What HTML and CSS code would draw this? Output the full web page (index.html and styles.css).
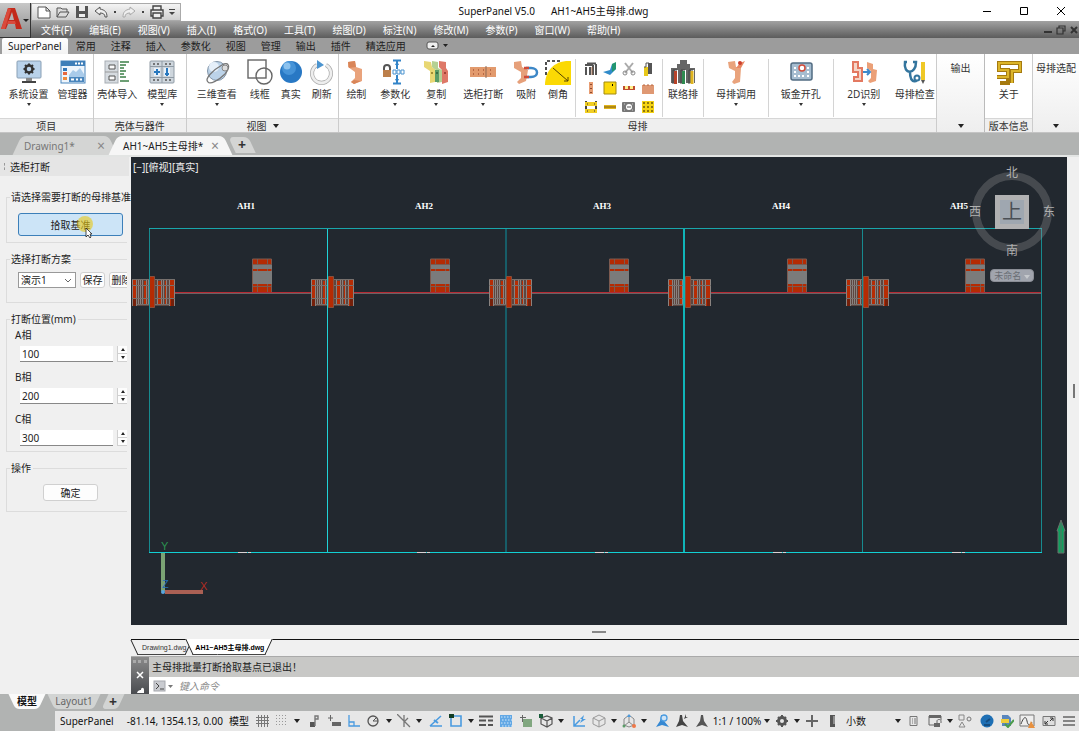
FILE: index.html
```html
<!DOCTYPE html>
<html lang="zh-CN">
<head>
    <meta charset="UTF-8">
    <meta name="viewport" content="width=device-width, initial-scale=1.0">
    <title>SuperPanel V5.0</title>
    <link rel="stylesheet" href="styles.css">
</head>
<body>
    <header class="top">
        <button class="app-button" aria-label="应用程序菜单">
            <svg width="31" height="31" viewBox="0 0 31 31">
                <path d="M1 24 8 3h7l7 21h-6l-1-5H8l-2 5z" fill="#c32a1b"/>
                <path d="M9 15h5l-2-8z" fill="#b4b4b4"/>
                <path d="M8 3l3 1-6 20H1zM8 16h7l1 3H7z" fill="#d94a3c"/>
                <path d="M23 14h6l-3 3z" fill="#222"/>
            </svg>
        </button>
        <div class="titlebar">
            <div class="quick">
                <button aria-label="新建"><svg width="16" height="16" viewBox="0 0 16 16"><path d="M2 3h8l4 4v7H2zM10 3v4h4" fill="#fff" stroke="#555"/></svg></button>
                <button aria-label="打开"><svg width="16" height="16" viewBox="0 0 16 16"><path d="M2 13V4h4l1 1h5v3M2 13l3-5h9l-3 5z" fill="#ddd" stroke="#555"/></svg></button>
                <button aria-label="保存"><svg width="16" height="16" viewBox="0 0 16 16"><path d="M2 2h12v12H2z" fill="#555"/><path d="M5 2h6v5H5zM5 10h6v3H5z" fill="#eee"/></svg></button>
                <button aria-label="放弃"><svg width="16" height="16" viewBox="0 0 16 16"><path d="M7 3 2 7l5 4V9c3 0 5 1 5 4h2c0-5-2-7-7-8z" fill="#eee" stroke="#555"/></svg></button>
                <span class="dot"></span>
                <button aria-label="重做"><svg width="16" height="16" viewBox="0 0 16 16"><path d="M9 3l5 4-5 4V9c-3 0-5 1-5 4H2c0-5 2-7 7-8z" fill="#eee" stroke="#aaa"/></svg></button>
                <span class="dot"></span>
                <button aria-label="打印"><svg width="16" height="16" viewBox="0 0 16 16"><path d="M4 6V2h8v4M4 12H2V6h12v6h-2M4 9h8v5H4z" fill="#eee" stroke="#444" stroke-width="1.4"/></svg></button>
                <button class="quick-more" aria-label="自定义"><svg width="8" height="8" viewBox="0 0 8 8"><path d="M1 1.500h6" stroke="#444"/><path d="M1 4h6L4 7z" fill="#444"/></svg></button>
            </div>
            <h1 class="title"><span>SuperPanel V5.0</span><span>AH1~AH5主母排.dwg</span></h1>
            <div class="window-buttons">
                <button aria-label="最小化"><svg width="10" height="10" viewBox="0 0 10 10"><path d="M1 5.500h8" stroke="#000"/></svg></button>
                <button aria-label="最大化"><svg width="10" height="10" viewBox="0 0 10 10"><path d="M1.500 1.500h7v7h-7z" fill="none" stroke="#000"/></svg></button>
                <button aria-label="关闭"><svg width="10" height="10" viewBox="0 0 10 10"><path d="M1 1l8 8M9 1l-8 8" stroke="#000"/></svg></button>
            </div>
        </div>
        <nav class="menubar">
            <a href="#">文件(F)</a>
            <a href="#">编辑(E)</a>
            <a href="#">视图(V)</a>
            <a href="#">插入(I)</a>
            <a href="#">格式(O)</a>
            <a href="#">工具(T)</a>
            <a href="#">绘图(D)</a>
            <a href="#">标注(N)</a>
            <a href="#">修改(M)</a>
            <a href="#">参数(P)</a>
            <a href="#">窗口(W)</a>
            <a href="#">帮助(H)</a>
            <div class="doc-buttons">
                <button aria-label="最小化文档"><svg width="10" height="10" viewBox="0 0 10 10"><path d="M1 7h8" stroke="#333" stroke-width="2"/></svg></button>
                <button aria-label="还原文档"><svg width="10" height="10" viewBox="0 0 10 10"><path d="M3 3V1h6v5H7M1 3h6v6H1z" fill="none" stroke="#333" stroke-width="1.200"/></svg></button>
                <button aria-label="关闭文档"><svg width="10" height="10" viewBox="0 0 10 10"><path d="M2 2l6 6M8 2L2 8" stroke="#333" stroke-width="2"/></svg></button>
            </div>
        </nav>
    </header>

    <nav class="ribbon-tabs">
        <a href="#" class="active">SuperPanel</a>
        <a href="#">常用</a>
        <a href="#">注释</a>
        <a href="#">插入</a>
        <a href="#">参数化</a>
        <a href="#">视图</a>
        <a href="#">管理</a>
        <a href="#">输出</a>
        <a href="#">插件</a>
        <a href="#">精选应用</a>
        <button class="ribbon-toggle" aria-label="最小化功能区">
            <svg width="24" height="10" viewBox="0 0 24 10"><rect x="1" y="1" width="11" height="7" rx="2" fill="#eee" stroke="#555"/><path d="M5 6l2-2 2 2zM17 3h5l-2.500 3z" fill="#222"/></svg>
        </button>
    </nav>

    <section class="ribbon">
        <div class="panel panel-project">
            <div class="tools">
                <button class="tool w48 more">
                    <svg width="26" height="26" viewBox="0 0 26 26"><rect x="1" y="2" width="24" height="17" rx="1" fill="#b9d2ea" stroke="#8aa0b5"/><path d="M10 19h6v3h-6z" fill="#888"/><path d="M6 22h14v2H6z" fill="#444"/><circle cx="13" cy="10" r="3.500" fill="none" stroke="#333" stroke-width="2.500"/><path d="M13 4.500v2M13 13.500v2M7.500 10h2M16.500 10h2M9 6l1.500 1.500M17 6l-1.500 1.500M9 14l1.500-1.500M17 14l-1.500-1.500" stroke="#333" stroke-width="2"/></svg>
                    <span>系统设置</span>
                </button>
                <button class="tool w40">
                    <svg width="26" height="26" viewBox="0 0 26 26"><rect x="1" y="2" width="24" height="22" fill="#eef5fc" stroke="#4a86bd"/><path d="M1 2h24v5H1z" fill="#3f7fb9"/><path d="M15 4.500h2M18 4.500h2M21 4.500h2" stroke="#fff" stroke-width="2"/><path d="M9 16l4-5 3 2 4-4 4 6v3H9z" fill="#a9cbea"/><path d="M3 9h4v3H3z" fill="#3579b8"/><path d="M3 13h4v3H3z" fill="#e8693f"/><path d="M3 18h4v3H3z" fill="#f08b3c"/><path d="M9 18h15v5H9z" fill="#4a86bd"/><path d="M11 20.500h3M16 20.500h2M20 20.500h2" stroke="#fff" stroke-width="2"/></svg>
                    <span>管理器</span>
                </button>
            </div>
            <h2>项目</h2>
        </div>
        <div class="panel panel-shell">
            <div class="tools">
                <button class="tool w45">
                    <svg width="26" height="26" viewBox="0 0 26 26"><rect x="1" y="2" width="13" height="22" fill="#d6dbe0" stroke="#a7adb3"/><path d="M1 13h13" stroke="#999"/><path d="M5 6h6v4H5zM5 17h6v4H5z" fill="#fafafa" stroke="#555"/><path d="M16 3h9M16 6h6M16 9h4M16 12h6M16 15h4M16 18h6M16 22h9" stroke="#3c8048" stroke-width="1.500"/></svg>
                    <span>壳体导入</span>
                </button>
                <button class="tool w45 more">
                    <svg width="26" height="26" viewBox="0 0 26 26"><rect x="1" y="2" width="24" height="22" rx="1" fill="#ced6dd" stroke="#909ba5"/><path d="M13 2v22M1 7.500h24M1 18.500h24" stroke="#909ba5"/><path d="M5 9h6v8H5zM15 9h6v8h-6z" fill="#e8f1fa"/><path d="M8 10v6M5 13h6M18 9v8M16 15h4" stroke="#2878be" stroke-width="2"/><path d="M4 5h2M8 5h2M16 5h2M20 5h2M4 21h2M8 21h2M16 21h2M20 21h2" stroke="#555" stroke-width="1.500"/></svg>
                    <span>模型库</span>
                </button>
            </div>
            <h2>壳体与器件</h2>
        </div>
        <div class="panel panel-view">
            <div class="tools">
                <button class="tool w56 more">
                    <svg width="26" height="26" viewBox="0 0 26 26"><circle cx="13" cy="12" r="9.500" fill="#bcd3e9" stroke="#8194a8"/><circle cx="10" cy="8" r="5" fill="#e6f0fa"/><path d="M4 23C0 20 9 11 18 6c7-4 9 2 3 9-6 6-15 11-17 8z" fill="none" stroke="#777" stroke-width="1.300"/><circle cx="21" cy="9" r="3" fill="#ddd" stroke="#888"/></svg>
                    <span>三维查看</span>
                </button>
                <button class="tool w30">
                    <svg width="26" height="26" viewBox="0 0 26 26"><rect x="1" y="1" width="18" height="18" fill="none" stroke="#666" stroke-width="1.400"/><circle cx="17" cy="17" r="8" fill="none" stroke="#666" stroke-width="1.400"/></svg>
                    <span>线框</span>
                </button>
                <button class="tool w32">
                    <svg width="26" height="26" viewBox="0 0 26 26"><circle cx="13" cy="13" r="11" fill="#2878c4"/><circle cx="11" cy="9" r="7" fill="#4593d8"/><circle cx="9" cy="7" r="3.500" fill="#8cc2ee"/></svg>
                    <span>真实</span>
                </button>
                <button class="tool w30">
                    <svg width="26" height="26" viewBox="0 0 26 26"><path d="M17 6a9.500 9.500 0 1 1-9 0" fill="none" stroke="#aaa" stroke-width="4"/><path d="M17 6a9.500 9.500 0 1 1-9 0" fill="none" stroke="#eee" stroke-width="2.500"/><path d="M8 1l7 5-7 4z" fill="#4b94cf"/></svg>
                    <span>刷新</span>
                </button>
            </div>
            <h2>视图 <i class="caret"></i></h2>
        </div>
        <div class="panel panel-busbar">
            <div class="tools">
                <button class="tool w34">
                    <svg width="26" height="26" viewBox="0 0 26 26"><path d="M5 3l7-1 1 6 6 2v12l-8 3-3-2 4-4v-6L5 8z" fill="#e9a37c"/><path d="M5 3l7-1 1 6-7 1zM11 21l7 1-7 3-3-2z" fill="#d98558"/></svg>
                    <span>绘制</span>
                </button>
                <button class="tool w44 more">
                    <svg width="26" height="26" viewBox="0 0 26 26"><path d="M2 12V9c0-4 6-4 6 0v3" fill="none" stroke="#555" stroke-width="2"/><path d="M1 11h8v7H1z" fill="#bc7f4b"/><path d="M11 1.500h8M11 24.500h8M15 2v8M15 16v8" stroke="#3384c8" stroke-width="2"/><path d="M13 6l2-4 2 4zM13 20l2 4 2-4z" fill="#3384c8"/><path d="M11 11h3v4h-3zM15 11h3v4h-3zM19 11h3v4h-3z" fill="none" stroke="#4b93cf"/></svg>
                    <span>参数化</span>
                </button>
                <button class="tool w38 more">
                    <svg width="26" height="26" viewBox="0 0 26 26"><path d="M1 2l7 1 1 5 3 2v13l-5 1V12l-6-4z" fill="#e8d773"/><path d="M9 2l6 1v6l4 2v12l-5 1V12l-5-4z" fill="#b5d093"/><path d="M16 2l7 1v6l2 3v11l-6 2V11l-3-3z" fill="#de7867"/><path d="M12 11h4v12h-4z" fill="#5a9c67"/><circle cx="9" cy="14" r="1" fill="#8c7622"/><circle cx="14" cy="14" r="1" fill="#2f5d3b"/><circle cx="22" cy="14" r="1" fill="#8f3027"/></svg>
                    <span>复制</span>
                </button>
                <button class="tool w56 more">
                    <svg width="26" height="26" viewBox="0 0 26 26"><path d="M0 8h26v10H0z" fill="#e29a6d"/><path d="M16 7v12" stroke="#8f6b57"/><path d="M3 11h1M3 15h1M8 11h1M8 15h1M13 11h1M13 15h1M20 11h1M20 15h1" stroke="#aa5a38" stroke-width="1.500"/></svg>
                    <span>选柜打断</span>
                </button>
                <button class="tool w30">
                    <svg width="26" height="26" viewBox="0 0 26 26"><path d="M1 3l7-1 1 6 6 3-2 11-7 3-2-2 4-4v-6L1 9z" fill="#e6a07a"/><path d="M13 9h5c8 0 8 9 0 9h-5" fill="none" stroke="#3c87c7" stroke-width="2.500"/><path d="M11 9h5M11 18h5" stroke="#cf4936" stroke-width="2.500"/></svg>
                    <span>吸附</span>
                </button>
                <button class="tool w34">
                    <svg width="26" height="26" viewBox="0 0 26 26"><path d="M0 26C0 12 9 1 26 2v24z" fill="#fbd904"/><path d="M1 16V2h15" fill="none" stroke="#222" stroke-width="1.600" stroke-dasharray="3 2"/><path d="M8 9l15 13M23 18v4h-4" fill="none" stroke="#554400"/></svg>
                    <span>倒角</span>
                </button>
                <span class="divider"></span>
                <div class="mini">
                    <button aria-label="多层排"><svg width="14" height="14" viewBox="0 0 14 14"><path d="M2 13V5M6 13V5M9 13V3M1 3h8M12 13V2M3 1.500h9" stroke="#555" stroke-width="2"/><path d="M8 5v8" stroke="#9a6446"/></svg></button>
                    <button aria-label="扭弯"><svg width="14" height="14" viewBox="0 0 14 14"><path d="M0 10l7-2 2-6 4-1v6l-6 6z" fill="#308bca"/><path d="M9 2l4-2v7l-4 3z" fill="#23966f"/></svg></button>
                    <button aria-label="剪切"><svg width="14" height="14" viewBox="0 0 14 14"><path d="M3 1l8 10M11 1L3 11" stroke="#aaa" stroke-width="2"/><circle cx="3" cy="11" r="2" fill="none" stroke="#888"/><circle cx="11" cy="11" r="2" fill="none" stroke="#888"/></svg></button>
                    <button aria-label="搭接"><svg width="14" height="14" viewBox="0 0 14 14"><path d="M7 1h4v11H7z" fill="#555"/><path d="M3 5h4v9H3z" fill="#e8c81a"/><path d="M3 5h2V1h3v4" stroke="#555" fill="none"/></svg></button>
                    <button aria-label="冲孔"><svg width="14" height="14" viewBox="0 0 14 14"><path d="M5 1h4v12H5z" fill="#e79d73"/><path d="M7 3v1M7 7v1M7 11v1" stroke="#8d4b2d" stroke-width="2"/></svg></button>
                    <button aria-label="板材"><svg width="14" height="14" viewBox="0 0 14 14"><path d="M1 1h12v12H1z" fill="#fbd90b" stroke="#a28a10"/><path d="M9 4h1" stroke="#000" stroke-width="2"/></svg></button>
                    <button aria-label="垫块"><svg width="14" height="14" viewBox="0 0 14 14"><path d="M1 5h12v4H1z" fill="#c04c30"/><path d="M3 5h3v3H3zM8 5h3v3H8z" fill="#fff08a"/></svg></button>
                    <button aria-label="铜板"><svg width="14" height="14" viewBox="0 0 14 14"><path d="M1 4h12v9H1z" fill="#df9873"/><path d="M2 4h10" stroke="#b6643f" stroke-dasharray="2 2"/></svg></button>
                    <button aria-label="支撑"><svg width="14" height="14" viewBox="0 0 14 14"><path d="M2 1v12M12 1v12" stroke="#444" stroke-width="2"/><path d="M1 2h12v4H1zM1 9h12v4H1z" fill="#f1ce22"/><path d="M3 4h1M10 4h1M3 11h1M10 11h1" stroke="#333"/></svg></button>
                    <button aria-label="绝缘条"><svg width="14" height="14" viewBox="0 0 14 14"><path d="M1 5h12v4H1z" fill="#e1b51d"/><path d="M1 7h12" stroke="#7c5d12"/></svg></button>
                    <button aria-label="套管"><svg width="14" height="14" viewBox="0 0 14 14"><rect x="0" y="2" width="13" height="10" rx="1" fill="#777"/><circle cx="7" cy="7" r="3" fill="#fff"/><path d="M5 7h4" stroke="#555"/><path d="M2 4h1M10 4h1M2 10h1M10 10h1" stroke="#ccc"/></svg></button>
                    <button aria-label="孔阵"><svg width="14" height="14" viewBox="0 0 14 14"><path d="M1 1h12v12H1z" fill="#f5d313"/><path d="M3 2v11M7 2v11M11 2v11" stroke="#6c5a0d" stroke-width="1.500" stroke-dasharray="2 2"/></svg></button>
                </div>
                <span class="divider"></span>
                <button class="tool w40">
                    <svg width="26" height="26" viewBox="0 0 26 26"><path d="M1 24V9h6V5h3V1h7v4h3v4h5v15z" fill="#666"/><path d="M5 11h3v15H5zM13 11h3v15h-3zM21 11h3v15h-3z" fill="#fff"/><path d="M3 25V11h4M11 25V11h4M19 25V11h4" stroke="#444" fill="none"/><path d="M5.500 12v13" stroke="#b7432a" stroke-width="3"/><path d="M13.500 12v13" stroke="#2f8b50" stroke-width="3"/><path d="M22 12v13" stroke="#dfb420" stroke-width="3"/></svg>
                    <span>联络排</span>
                </button>
                <span class="divider"></span>
                <button class="tool w64 more">
                    <svg width="26" height="26" viewBox="0 0 26 26"><path d="M5 3l7-1 1 6 5 1-1 14-6 2-2-2 3-4v-7L6 9z" fill="#e9a37c"/><path d="M13 9l4-5 5-2-4 7z" fill="#e88762"/><circle cx="17" cy="4" r="2" fill="#cc3e2e"/></svg>
                    <span>母排调用</span>
                </button>
                <span class="divider"></span>
                <button class="tool w64 more">
                    <svg width="26" height="26" viewBox="0 0 26 26"><rect x="3" y="4" width="21" height="17" rx="2" fill="#a6bdd0" stroke="#526c82" stroke-width="1.500"/><circle cx="14" cy="9" r="3" fill="#fff" stroke="#d24b39" stroke-width="1.500"/><path d="M6 9h2M19 9h2M6 13h2M19 13h2M6 17h2M10 17h2M14 17h2M19 17h2" stroke="#fff" stroke-width="2"/></svg>
                    <span>钣金开孔</span>
                </button>
                <span class="divider"></span>
                <button class="tool w60 more">
                    <svg width="26" height="26" viewBox="0 0 26 26"><path d="M2 3h5v6h4v13H3v-4h4v-5H2z" fill="#f4d5c7" stroke="#e37961" stroke-width="2"/><path d="M16 3l6 2v5l4 1-1 11-6 2-2-2 3-3v-7l-4-3z" fill="#eba078"/><path d="M12 13h6M16 10l3 3-3 3" fill="none" stroke="#3d89cc" stroke-width="2"/></svg>
                    <span>2D识别</span>
                </button>
                <button class="tool w42">
                    <svg width="26" height="26" viewBox="0 0 26 26"><path d="M5 3H3c-2 13 11 13 11 0h-3M8 13c0 13 9 10 7 5" fill="none" stroke="#34759e" stroke-width="2.500"/><circle cx="15" cy="19" r="2.500" fill="#fff" stroke="#34759e" stroke-width="2"/><path d="M19 3h4v18h-4z" fill="#efc826"/><path d="M19 21h4l-2 4z" fill="#555"/></svg>
                    <span>母排检查</span>
                </button>
            </div>
            <h2>母排</h2>
        </div>
        <button class="panel-closed">输出<i class="caret"></i></button>
        <div class="panel panel-version">
            <div class="tools">
                <button class="tool w46">
                    <svg width="26" height="26" viewBox="0 0 26 26"><path d="M12 4H3v7h9v7H1M12 4h12v8h-8v12M12 11v13H4" fill="none" stroke="#a57a10" stroke-width="4"/><path d="M12 4H3v7h9v7H1M12 4h12v8h-8v12" fill="none" stroke="#dcb52a" stroke-width="2"/></svg>
                    <span>关于</span>
                </button>
            </div>
            <h2>版本信息</h2>
        </div>
        <button class="panel-closed last">母排选配<i class="caret"></i></button>
    </section>

    <nav class="doc-tabs">
        <a href="#" class="doc-tab first">Drawing1* <b>×</b></a>
        <a href="#" class="doc-tab second active">AH1~AH5主母排* <b>×</b></a>
        <button class="doc-tab add" aria-label="新图形">+</button>
    </nav>

    <main class="workspace">
        <aside class="palette">
            <h2><i></i>选柜打断</h2>
            <form class="palette-form">
                <fieldset class="pick">
                    <legend>请选择需要打断的母排基准</legend>
                    <button type="button" class="pick-button">拾取基准
                        <svg class="pointer" width="24" height="24" viewBox="0 0 24 24"><circle cx="9" cy="9" r="8" fill="#e9c814" fill-opacity=".6"/><path d="M10 13v9l2-2 2 3 1-1-1-3h2z" fill="#fff" stroke="#222" stroke-width=".8"/></svg>
                    </button>
                </fieldset>
                <fieldset class="plan">
                    <legend>选择打断方案</legend>
                    <div class="plan-row">
                        <select aria-label="打断方案"><option>演示1</option></select>
                        <button type="button">保存</button>
                        <button type="button">删除</button>
                    </div>
                </fieldset>
                <fieldset class="positions">
                    <legend>打断位置(mm)</legend>
                    <label for="phaseA">A相</label>
                    <div class="spin"><input type="text" id="phaseA" value="100"><div><button type="button" aria-label="A相增加"><i class="up"></i></button><button type="button" aria-label="A相减少"><i class="down"></i></button></div></div>
                    <label for="phaseB">B相</label>
                    <div class="spin"><input type="text" id="phaseB" value="200"><div><button type="button" aria-label="B相增加"><i class="up"></i></button><button type="button" aria-label="B相减少"><i class="down"></i></button></div></div>
                    <label for="phaseC">C相</label>
                    <div class="spin"><input type="text" id="phaseC" value="300"><div><button type="button" aria-label="C相增加"><i class="up"></i></button><button type="button" aria-label="C相减少"><i class="down"></i></button></div></div>
                </fieldset>
                <fieldset class="actions">
                    <legend>操作</legend>
                    <button type="button">确定</button>
                </fieldset>
            </form>
        </aside>

        <div class="editor">
            <div class="viewport">
                <div class="canvas">
                    <span class="view-label">[−][俯视][真实]</span>
                    <svg class="drawing" viewBox="0 0 936 468">
                        <defs>
                            <!-- horizontal joint, origin at the cabinet's left edge -->
                            <g id="joint">
                                <path d="M-17 122h43v27h-43z" fill="#5c4640"/>
                                <path d="M-17 122h4v27h-4zM21 122h5v27h-5zM-5 124h2v23h-2zM9 124h3v23H9zM16 124h1v23h-1z" fill="#b62c04"/>
                                <path d="M-17 141h4v8h-4zM22 141h4v8h-4z" fill="#75200a"/>
                                <path d="M-12.500 122v27M-10.500 123v25M-8.500 123v25M-6.500 123v25M-2.500 123v25M-.5 123v25M8.500 123v25M12.500 123v25M14.500 123v25M17.500 123v25M20.500 122v27M-16.500 122v27M25.500 122v27" stroke="#8a8380"/>
                                <path d="M-17 122.500h43M-17 128.500h43M-17 141.500h43M-12 147.500h33" stroke="#77706d"/>
                                <path d="M.5 119.500h5v31h-5z" fill="#b52b03" stroke="#87503d"/>
                            </g>
                            <!-- vertical branch joint -->
                            <g id="branch">
                                <path d="M104 102h19v33h-19z" fill="#b52b03"/>
                                <path d="M103.500 135v-33h19v33M108.500 102v33M118.500 102v33M104 107.500h19M104 129.500h19" fill="none" stroke="#7b5a50"/>
                                <path d="M104 108h19v4h-19zM104 114h19v13h-19z" fill="#7b7b7b"/>
                            </g>
                        </defs>
                        <path d="M18.500 71.500v324M731.500 71.500v324M910.500 71.500v324" stroke="#178a8f"/>
                        <path d="M18 71.500h893" stroke="#19a6ab"/>
                        <path d="M18 395.500h893" stroke="#12cfd3"/>
                        <path d="M375 72v323" stroke="#175d68" stroke-width="2"/>
                        <path d="M44 135.500h866" stroke="#b52b35"/>
                        <path d="M44 136.500h866" stroke="#6c6163"/>
                        <use href="#joint" x="18"/><use href="#joint" x="197"/><use href="#joint" x="375"/><use href="#joint" x="554"/><use href="#joint" x="732"/>
                        <use href="#branch" x="18"/><use href="#branch" x="196"/><use href="#branch" x="375"/><use href="#branch" x="553"/><use href="#branch" x="731"/>
                        <path d="M196.500 72v323" stroke="#20d3d8"/>
                        <path d="M553 72v323" stroke="#10b4b8" stroke-width="2"/>
                        <path d="M18.500 119v32M731.500 119v32" stroke="#178a8f"/>
                        <path d="M107 395.500h13M286 395.500h13M464 395.500h13M642 395.500h13M821 395.500h13" stroke="#d8d2d4" stroke-dasharray="9 1"/>
                        <g class="cabinet-name">
                            <text x="106" y="52">AH1</text><text x="284" y="52">AH2</text><text x="462" y="52">AH3</text><text x="641" y="52">AH4</text><text x="819" y="52">AH5</text>
                        </g>
                        <path d="M32 396v38" stroke="#7ba374" stroke-width="4"/>
                        <path d="M34 435h38" stroke="#aa6054" stroke-width="4"/>
                        <circle cx="32" cy="435" r="2" fill="#5aa7e0"/>
                        <g class="axis"><text x="30" y="393" fill="#2b9250">Y</text><text x="69" y="433" fill="#b32c22">X</text><text x="31" y="431" fill="#256fb5">Z</text></g>
                        <path d="M927 396v-22h-1l4-11 4 11h-1v22z" fill="#0fa05d" stroke="#69706c"/>
                        <path d="M930 364v32" stroke="#5f6d65"/>
                    </svg>
                    <div class="viewcube">
                        <svg class="compass" width="80" height="80" viewBox="0 0 80 80"><circle cx="40" cy="40" r="36" fill="none" stroke="#a4a5a6" stroke-opacity=".28" stroke-width="8"/></svg>
                        <span class="north">北</span>
                        <span class="west">西</span>
                        <button class="face">上</button>
                        <span class="east">东</span>
                        <span class="south">南</span>
                    </div>
                    <button class="ucs-name">未命名 <i></i></button>
                </div>
                <span class="grip-y"></span>
            </div>
            <div class="splitter"><span></span></div>
            <nav class="file-tabs">
                <a href="#">Drawing1.dwg</a>
                <a href="#" class="active">AH1~AH5主母排.dwg</a>
            </nav>
            <div class="command">
                <div class="command-side">
                    <i></i>
                    <button aria-label="关闭命令行"><svg width="8" height="8" viewBox="0 0 8 8"><path d="M1 1l6 6M7 1L1 7" stroke="#fff" stroke-width="1.500"/></svg></button>
                    <button aria-label="自定义命令行"><svg width="9" height="8" viewBox="0 0 9 8"><path d="M1 7c1-3 3-3 4-3 0-3 3-3 3 0v3H1l3-2" fill="#fff"/></svg></button>
                </div>
                <div class="command-body">
                    <p>主母排批量打断拾取基点已退出！</p>
                    <div class="command-line">
                        <button class="prompt" aria-label="最近使用的命令"><svg width="20" height="12" viewBox="0 0 20 12"><rect x="1" y="1" width="11" height="10" fill="#c9cbd0" stroke="#a5a7ad"/><path d="M3 3l3 3-3 3M7 9h4" fill="none" stroke="#444"/><path d="M15 5h5l-2.500 3z" fill="#777"/></svg></button>
                        <input type="text" placeholder="键入命令" aria-label="键入命令">
                    </div>
                </div>
            </div>
        </div>
    </main>

    <nav class="layout-tabs">
        <a href="#" class="model">模型</a>
        <a href="#" class="sheet">Layout1</a>
        <button class="add" aria-label="新建布局">+</button>
    </nav>

    <footer class="status">
        <span class="status-app">SuperPanel</span>
        <span class="coords">-81.14, 1354.13, 0.00</span>
        <button class="space">模型</button>
        <button aria-label="栅格"><svg width="14" height="14" viewBox="0 0 14 14"><path d="M3.500 1v12M6.500 1v12M9.500 1v12M12.500 1v12M1 3.500h13M1 6.500h13M1 9.500h13" stroke="#777"/></svg></button>
        <button aria-label="捕捉"><svg width="14" height="14" viewBox="0 0 14 14"><path d="M1.500 1v12M4.500 1v12M7.500 1v12M10.500 1v12" stroke="#999" stroke-dasharray="1 2"/></svg></button>
        <button class="drop" aria-label="捕捉设置"><i class="caret"></i></button>
        <span class="gap"></span>
        <button aria-label="推断约束"><svg width="14" height="14" viewBox="0 0 14 14"><path d="M3 8h5v5H3z" fill="#555"/><path d="M8 12V2h3v3H8" fill="none" stroke="#777" stroke-width="1.400"/></svg></button>
        <button aria-label="动态输入"><svg width="14" height="14" viewBox="0 0 14 14"><path d="M1 4h5M3.500 1v6" stroke="#666"/><path d="M5 8h9v4H5z" fill="#666"/></svg></button>
        <button aria-label="正交"><svg width="14" height="14" viewBox="0 0 14 14"><path d="M2 1v11h11M2 8h5v4" fill="none" stroke="#4a9be0" stroke-width="1.300"/></svg></button>
        <button aria-label="极轴"><svg width="14" height="14" viewBox="0 0 14 14"><circle cx="6" cy="7" r="5" fill="none" stroke="#555" stroke-width="1.300"/><path d="M6 7h5M6 7l4-4" fill="none" stroke="#555"/></svg></button>
        <button class="drop" aria-label="极轴设置"><i class="caret"></i></button>
        <button aria-label="等轴测"><svg width="14" height="14" viewBox="0 0 14 14"><path d="M0 0l13 13M7 1v12M11 4l-4 4" stroke="#777" fill="none" stroke-width="1.300"/></svg></button>
        <button class="drop" aria-label="等轴测设置"><i class="caret"></i></button>
        <span class="gap"></span>
        <button aria-label="对象追踪"><svg width="14" height="14" viewBox="0 0 14 14"><path d="M1 12h12M1 12L12 2" stroke="#4a9be0" stroke-width="1.500"/><path d="M5 6l4 3" stroke="#4a9be0" stroke-width="2"/></svg></button>
        <button aria-label="对象捕捉"><svg width="14" height="14" viewBox="0 0 14 14"><path d="M2 2h10v10H2z" fill="none" stroke="#4a9be0" stroke-width="1.600"/><path d="M0 0h5v4H0z" fill="#123c22"/></svg></button>
        <button class="drop" aria-label="捕捉点"><i class="caret"></i></button>
        <button aria-label="线宽"><svg width="14" height="14" viewBox="0 0 14 14"><path d="M0 2.500h14M0 6.500h7M9 6.500h5M0 11h7M9 11h5" stroke="#555" stroke-width="2"/></svg></button>
        <button aria-label="透明度"><svg width="14" height="14" viewBox="0 0 14 14"><path d="M1 1h12v12H1z" fill="#62a8e5"/><path d="M2 3h10M3 6h10M2 9h10M3 12h10" stroke="#d5e9fa" stroke-dasharray="1.500 1.500"/></svg></button>
        <button aria-label="选择循环"><svg width="14" height="14" viewBox="0 0 14 14"><path d="M4 5h9v8H4z" fill="#81a780"/><path d="M3.500 1v7M1 3.500h6" stroke="#666"/></svg></button>
        <button aria-label="三维捕捉"><svg width="14" height="14" viewBox="0 0 14 14"><path d="M2 4l6-2 5 2v6l-5 3-6-3zM2 4l6 3 5-3M8 7v6" fill="none" stroke="#555" stroke-width="1.200"/><path d="M0 0h4v4H0z" fill="#185c39"/></svg></button>
        <button class="drop" aria-label="三维捕捉设置"><i class="caret"></i></button>
        <span class="gap wide"></span>
        <button aria-label="动态 UCS"><svg width="14" height="14" viewBox="0 0 14 14"><path d="M2 2v10h11M2 12l6-6" fill="none" stroke="#4a9be0" stroke-width="1.500"/><path d="M8 5l4-4-1 4h3L8 9l2-4z" fill="#4a9be0"/></svg></button>
        <button aria-label="选择过滤"><svg width="14" height="14" viewBox="0 0 14 14"><path d="M1 4l6-3 6 3v6l-6 3-6-3zM1 4l6 3 6-3M7 7v6" fill="none" stroke="#999"/></svg></button>
        <button class="drop" aria-label="过滤设置"><i class="caret"></i></button>
        <button aria-label="小控件"><svg width="14" height="14" viewBox="0 0 14 14"><path d="M7 1L2 5v6l5 2 5-2V5zM7 2v6M7 8l5 4M7 8l-5 4" fill="none" stroke="#888"/><circle cx="12" cy="12" r="2" fill="#ef7848"/><path d="M5 3l2-3 2 3z" fill="#4a9be0"/><circle cx="2" cy="12" r="1.500" fill="#5a9c67"/></svg></button>
        <button class="drop" aria-label="小控件设置"><i class="caret"></i></button>
        <span class="gap wide"></span>
        <button aria-label="注释可见性"><svg width="14" height="14" viewBox="0 0 14 14"><path d="M6 1h2l1 6 5 6-7-2-6 2 4-6z" fill="#3588d2"/><circle cx="9" cy="4" r="3" fill="#cfe4f6" stroke="#4a9be0" stroke-width="1.300"/></svg></button>
        <button aria-label="自动缩放"><svg width="14" height="14" viewBox="0 0 14 14"><path d="M5 1h2l1 6 5 6-6-2-6 2 3-6zM9 5l2-5v3h2z" fill="#444"/></svg></button>
        <button aria-label="注释比例图标"><svg width="14" height="14" viewBox="0 0 14 14"><path d="M6 1h2l1 6 4 6-6-2-6 2 4-6z" fill="#555"/></svg></button>
        <button class="scale">1:1 / 100%</button>
        <button class="drop" aria-label="比例列表"><i class="caret"></i></button>
        <button aria-label="工作空间"><svg width="14" height="14" viewBox="0 0 14 14"><circle cx="7" cy="7" r="3.500" fill="none" stroke="#555" stroke-width="3"/><path d="M7 1v2M7 11v2M1 7h2M11 7h2M3 3l1 1M11 3l-1 1M3 11l1-1M11 11l-1-1" stroke="#555" stroke-width="2"/></svg></button>
        <button class="drop" aria-label="工作空间列表"><i class="caret"></i></button>
        <button aria-label="注释监视器"><svg width="14" height="14" viewBox="0 0 14 14"><path d="M7 1v12M1 7h12" stroke="#666" stroke-width="2"/></svg></button>
        <button aria-label="单位"><svg width="14" height="14" viewBox="0 0 14 14"><path d="M5 1h5v12H5z" fill="#555"/><path d="M8 3h2M8 5h2M8 7h2M8 9h2" stroke="#ccc"/></svg></button>
        <select class="units" aria-label="单位"><option>小数</option></select>
        <button aria-label="快捷特性"><svg width="14" height="14" viewBox="0 0 14 14"><path d="M4 2.500h7v9H4zM6 5h1M8 5h2M6 7h1M8 7h2M6 9h1M8 9h2" fill="none" stroke="#777"/></svg></button>
        <span class="gap"></span>
        <button aria-label="锁定界面"><svg width="14" height="14" viewBox="0 0 14 14"><path d="M1 2h12v4M6 11H1V2" fill="none" stroke="#666"/><path d="M1 1h12v3H1zM6 9h6v4H6z" fill="#666"/><path d="M9 9V7c0-2 4-2 4 0v2" fill="none" stroke="#666"/></svg></button>
        <button class="drop" aria-label="锁定选项"><i class="caret"></i></button>
        <button aria-label="隔离对象"><svg width="14" height="14" viewBox="0 0 14 14"><path d="M1 1h5v5H1zM4 8l3 5H1z" fill="none" stroke="#888"/><circle cx="11" cy="5" r="2" fill="none" stroke="#777"/></svg></button>
        <span class="gap"></span>
        <button aria-label="硬件加速"><svg width="14" height="14" viewBox="0 0 14 14"><circle cx="7" cy="7" r="6.500" fill="#1e6fb4"/><path d="M6 8l4-3M4 11h6" stroke="#154d80" stroke-width="2"/></svg></button>
        <button aria-label="图纸检查"><svg width="14" height="14" viewBox="0 0 14 14"><path d="M2 1h6l3 3v8H2z" fill="#5a87bd"/><path d="M1 5h8v4H1z" fill="#efcd3c"/><path d="M5 10l3 3 6-7" fill="none" stroke="#4c9c4b" stroke-width="2"/></svg></button>
        <button aria-label="性能"><svg width="16" height="14" viewBox="0 0 16 14"><path d="M1 1h14v11H1z" fill="#eee" stroke="#777"/><path d="M2 10c3-8 5-8 6-3s3 5 5 1" fill="none" stroke="#444"/><path d="M12 7l4 7H9z" fill="#e8913f"/></svg></button>
        <span class="gap"></span>
        <button aria-label="全屏"><svg width="14" height="14" viewBox="0 0 14 14"><path d="M1 2.500h12v9H1z" fill="#ddd" stroke="#777"/><path d="M3 10l3-3M3 7v3h3M11 4L8 7M8 4h3v3" fill="none" stroke="#333"/></svg></button>
        <button aria-label="自定义"><svg width="14" height="14" viewBox="0 0 14 14"><path d="M1 3h12M1 7h12M1 11h12" stroke="#666" stroke-width="1.500"/></svg></button>
    </footer>
</body>
</html>
```

FILE: styles.css
```css
* {
    box-sizing: border-box;
}
body {
    margin: 0;
    height: 100vh;
    display: flex;
    flex-direction: column;
    overflow: hidden;
    background: #f0f0f0;
    color: #333;
    font-family: "Noto Sans", "Noto Sans CJK SC", sans-serif;
    font-size: 10px;
    line-height: 14px;
}
button, input, select {
    font: inherit;
    color: inherit;
    margin: 0;
    padding: 0;
    border: none;
    background: none;
    border-radius: 0;
}
a {
    color: inherit;
    text-decoration: none;
}
h1, h2, p {
    margin: 0;
    font-size: 10px;
    font-weight: normal;
}
svg {
    display: block;
    flex: none;
}
.caret {
    display: inline-block;
    border: 3px solid transparent;
    border-top: 4px solid #222;
    border-bottom: 0;
}

/* title and menu */
.top {
    display: grid;
    grid-template-columns: 31px 1fr;
    grid-template-rows: 21px 17px;
    background: #fff;
}
.app-button {
    grid-row: 1 / 3;
    margin-top: 3px;
    background: linear-gradient(#c8c8c8, #8c8c8c);
    border-right: 1px solid #333;
    border-bottom: 1px solid #333;
}
.titlebar {
    display: flex;
    align-items: center;
}
.quick {
    display: flex;
    align-items: center;
    align-self: end;
    gap: 3px;
    height: 18px;
    padding: 0 4px 0 4px;
    background: linear-gradient(#f4f4f4, #cfcfcf);
    border: 1px solid #aaa;
}
.quick .dot {
    width: 6px;
    height: 2px;
    border: 2px solid #e2e2e2;
    border-width: 0 2px;
    background: #444;
}
.title {
    flex: 1;
    display: flex;
    justify-content: center;
    gap: 16px;
    padding-right: 42px;
    color: #111;
}
.window-buttons {
    display: flex;
}
.window-buttons button {
    width: 37px;
    display: flex;
    justify-content: center;
}
.menubar {
    display: flex;
    align-items: center;
    gap: 17px;
    padding-left: 10px;
    background: linear-gradient(#a2a2a2, #5c5c5c);
    color: #fff;
}
.doc-buttons {
    display: flex;
    gap: 3px;
    margin-left: auto;
}
.ribbon-tabs {
    display: flex;
    align-items: center;
    gap: 15px;
    height: 16px;
    padding-left: 2px;
    background: #9c9c9c;
    color: #222;
}
.ribbon-tabs .active {
    height: 16px;
    margin-right: -7px;
    padding: 1px 6px 0;
    background: linear-gradient(#fff, #f3f3f3);
    border-radius: 2px 2px 0 0;
}
.ribbon-toggle {
    margin-left: 5px;
}

/* ribbon */
.ribbon {
    display: flex;
    height: 79px;
    background: #fff;
    border-bottom: 1px solid #c4c4c4;
}
.panel {
    display: flex;
    flex-direction: column;
    min-width: 0;
    border-right: 1px solid #ccc;
}
.panel h2 {
    flex: none;
    height: 14px;
    line-height: 14px;
    text-align: center;
    background: #efefef;
    border-top: 1px solid #d6d6d6;
    white-space: nowrap;
}
.panel h2 .caret {
    margin: 0 0 2px 4px;
}
.panel-project, .panel-shell { flex: 93 1 0; }
.panel-view { flex: 152 1 0; }
.panel-busbar { flex: 599 1 0; }
.panel-version { flex: 47 1 0; }
.tools {
    flex: 1;
    display: flex;
    justify-content: center;
    min-height: 0;
    padding-top: 5px;
}
.panel-project .tools {
    justify-content: flex-end;
}
.tool {
    display: flex;
    flex-direction: column;
    align-items: center;
    white-space: nowrap;
}
.tool span {
    margin-top: 2px;
}
.more::after {
    content: "";
    margin-top: 2px;
    border: 2px solid transparent;
    border-top: 3px solid #333;
    border-bottom: 0;
}
.w30 { width: 30px; }
.w32 { width: 32px; }
.w34 { width: 34px; }
.w38 { width: 38px; }
.w40 { width: 40px; }
.w42 { width: 42px; }
.w44 { width: 44px; }
.w45 { width: 45px; }
.w46 { width: 46px; }
.w48 { width: 48px; }
.w56 { width: 56px; }
.w60 { width: 60px; }
.w64 { width: 64px; }
.divider {
    width: 1px;
    height: 58px;
    background: #d4d4d4;
}
.mini {
    display: grid;
    grid-template-columns: repeat(4, 19px);
    grid-auto-rows: 19px;
    padding: 0 5px;
}
.mini button {
    display: flex;
    align-items: center;
    justify-content: center;
}
.panel-closed {
    flex: 48 1 0;
    display: flex;
    flex-direction: column;
    align-items: center;
    justify-content: space-between;
    padding: 7px 0 4px;
    background: linear-gradient(#fff, #eee);
    border-right: 1px solid #bbb;
    white-space: nowrap;
}
.panel-closed.last {
    flex: 46 1 0;
    border-right: none;
}

/* drawing tabs */
.doc-tabs {
    display: flex;
    height: 24px;
    padding: 3px 0 0 17px;
    background: #b1b3b2;
    border-bottom: 2px solid #e3e5e4;
}
.doc-tab {
    --tab: #d4d5d4;
    position: relative;
    z-index: 0;
    display: flex;
    align-items: center;
    color: #777;
    white-space: nowrap;
}
.doc-tab::before, .doc-tab::after {
    content: "";
    position: absolute;
    z-index: -1;
    top: 0;
    bottom: 0;
    background: var(--tab);
}
.doc-tab::before {
    left: 0;
    right: 40%;
    transform: skewX(-25deg);
    border-radius: 5px 0 0 0;
}
.doc-tab::after {
    left: 40%;
    right: 0;
    transform: skewX(25deg);
    border-radius: 0 5px 0 0;
}
.doc-tab b {
    margin-left: auto;
    color: #888;
    font-size: 14px;
    font-weight: normal;
}
.doc-tab.first {
    width: 96px;
    padding: 0 8px 0 7px;
}
.doc-tab.second {
    z-index: 1;
    width: 115px;
    padding: 0 9px 0 10px;
}
.doc-tab.active {
    --tab: #f6f6f6;
    color: #222;
}
.doc-tab.add {
    width: 20px;
    height: 16px;
    margin: 1px 0 0 4px;
    justify-content: center;
    color: #333;
    font-size: 14px;
    font-weight: bold;
}
.doc-tab.add::before {
    transform: skewX(25deg);
}

/* palette */
.workspace {
    flex: 1;
    display: flex;
    min-height: 0;
}
.palette {
    width: 131px;
    flex: none;
    overflow: hidden;
    color: #222;
}
.palette h2 {
    display: flex;
    align-items: center;
    gap: 5px;
    height: 19px;
    margin-right: 2px;
    padding-left: 4px;
    background: #e5e5e5;
}
.palette h2 i {
    width: 1px;
    height: 7px;
    border-left: 1px dashed #999;
}
.palette-form {
    display: flex;
    flex-direction: column;
    gap: 9px;
    margin: 14px 4px 0 6px;
}
.palette fieldset {
    min-width: 0;
    margin: 0;
    padding: 0 0 0 11px;
    border: 1px solid #dcdcdc;
    border-right: none;
}
.palette legend {
    margin-left: -8px;
    padding: 0 2px 0 1px;
    white-space: nowrap;
}
.palette fieldset button {
    background: #fdfdfd;
    border: 1px solid #d0d0d0;
    border-radius: 3px;
}
.palette .pick {
    height: 53px;
}
.palette .pick-button {
    position: relative;
    width: 105px;
    height: 23px;
    margin-top: 9px;
    background: #cce4f7;
    border: 1px solid #3c7fb9;
}
.pointer {
    position: absolute;
    left: 57px;
    top: 1px;
}
.palette .plan {
    height: 51px;
}
.plan-row {
    display: flex;
    gap: 4px;
    margin-top: 6px;
    overflow: hidden;
}
.plan-row select {
    flex: none;
    width: 58px;
    height: 16px;
    padding-left: 2px;
    appearance: none;
    border: 1px solid #999;
    background: #fff url("data:image/svg+xml,%3Csvg xmlns='http://www.w3.org/2000/svg' width='8' height='5'%3E%3Cpath d='M1 1l3 3 3-3' fill='none' stroke='%23666'/%3E%3C/svg%3E") no-repeat right 3px center;
}
.plan-row button {
    flex: none;
    width: 25px;
    height: 16px;
    line-height: 12px;
}
.palette .positions {
    height: 140px;
}
.positions label {
    display: block;
    height: 14px;
    margin: 3px 0 0 -3px;
}
.positions legend + label {
    margin-top: 2px;
}
.spin {
    display: flex;
    gap: 4px;
    height: 16px;
    margin: 4px 0 8px 2px;
}
.spin input {
    flex: 1;
    min-width: 0;
    padding-left: 2px;
    background: #fff;
    border-bottom: 1px solid #888;
}
.spin div {
    display: flex;
    flex-direction: column;
    width: 10px;
}
.palette .spin button {
    flex: 1;
    display: flex;
    align-items: center;
    justify-content: center;
    border-radius: 0;
    border-width: 0 0 1px 1px;
}
.up, .down {
    border: 2px solid transparent;
}
.up {
    border-top: 0;
    border-bottom: 3px solid #222;
}
.down {
    border-bottom: 0;
    border-top: 3px solid #222;
}
.palette .actions {
    height: 51px;
}
.actions button {
    width: 55px;
    height: 17px;
    margin: 9px 0 0 25px;
    line-height: 12px;
}

/* drawing area */
.editor {
    flex: 1;
    display: flex;
    flex-direction: column;
    min-width: 0;
}
.viewport {
    flex: 1;
    display: flex;
    min-height: 0;
}
.canvas {
    position: relative;
    flex: 1;
    min-width: 0;
    background: #22282f;
}
.drawing {
    width: 100%;
    height: 100%;
}
.cabinet-name {
    fill: #fff;
    font-family: "Liberation Serif", serif;
    font-size: 9px;
    font-weight: bold;
}
.axis {
    font-family: "Liberation Sans", sans-serif;
    font-size: 11px;
}
.view-label {
    position: absolute;
    left: 2px;
    top: 3px;
    color: #eee;
}
.viewcube {
    position: absolute;
    top: 9px;
    right: 10px;
    width: 90px;
    height: 92px;
    display: grid;
    grid-template: 28px 36px 28px / 16px 58px 16px;
    place-items: center;
    color: #b0b0b0;
    font-size: 12px;
}
.compass {
    position: absolute;
    left: 5px;
    top: 6px;
}
.north, .south {
    grid-column: 1 / 4;
    z-index: 1;
}
.north {
    align-self: start;
}
.south {
    align-self: end;
}
.west, .east, .face {
    z-index: 1;
}
.face {
    width: 34px;
    height: 34px;
    background: #9fa7b0;
    border: 5px solid #b1b1b2;
    color: #4a4f55;
    font-size: 20px;
    line-height: 22px;
}
.ucs-name {
    position: absolute;
    top: 112px;
    right: 33px;
    width: 44px;
    height: 13px;
    border-radius: 4px;
    border: 1px solid #8b8e96;
    background: #a1a5ae;
    color: #696d74;
    font-size: 9px;
    line-height: 10px;
}
.ucs-name i {
    display: inline-block;
    border: 3px solid transparent;
    border-top: 4px solid #c5c8cc;
    border-bottom: 0;
}
.grip-y {
    align-self: center;
    width: 3px;
    height: 14px;
    margin: 0 4px 0 5px;
    border-right: 2px solid #777;
}
.splitter {
    display: flex;
    align-items: center;
    justify-content: center;
    height: 14px;
}
.splitter span {
    width: 14px;
    height: 2px;
    margin-right: 12px;
    background: #888;
}

/* file tabs and command line */
.file-tabs {
    display: flex;
    height: 17px;
    padding-left: 3px;
    border-top: 1px solid #111;
    font-family: "Liberation Sans", "Noto Sans CJK SC", sans-serif;
    font-size: 7px;
}
.file-tabs a {
    position: relative;
    z-index: 0;
    height: 15px;
    padding: 0 3px 0 8px;
    line-height: 15px;
    white-space: nowrap;
}
.file-tabs a::before, .file-tabs a::after {
    content: "";
    position: absolute;
    z-index: -1;
    top: 0;
    bottom: 0;
    border-bottom: 1px solid #444;
}
.file-tabs a::before {
    left: 0;
    right: 40%;
    border-left: 1px solid #222;
    transform: skewX(25deg);
}
.file-tabs a::after {
    left: 40%;
    right: 0;
    border-right: 1px solid #222;
    transform: skewX(-25deg);
}
.file-tabs .active {
    padding: 0 5px 0 6px;
    color: #000;
    font-weight: bold;
}
.file-tabs .active::before, .file-tabs .active::after {
    top: -1px;
    background: #fff;
}
.command {
    display: flex;
    height: 38px;
    border-top: 1px solid #aaa;
}
.command-side {
    width: 18px;
    display: flex;
    flex-direction: column;
    align-items: center;
    justify-content: space-between;
    padding-top: 3px;
    background: linear-gradient(#8a8a8a, #4a4c50);
}
.command-side i {
    width: 14px;
    border-top: 3px dotted #aaa;
}
.command-body {
    flex: 1;
    display: flex;
    flex-direction: column;
    background: #fff;
}
.command-body p {
    height: 20px;
    padding: 3px 3px 0;
    background: #c8c8c6;
    color: #222;
}
.command-line {
    flex: 1;
    display: flex;
    align-items: center;
    gap: 6px;
    padding-left: 4px;
}
.command-line input {
    flex: 1;
    font-style: italic;
}
.command-line input::placeholder {
    color: #888;
}

/* layout tabs */
.layout-tabs {
    display: flex;
    gap: 9px;
    height: 17px;
    padding: 0 0 2px 12px;
    background: #b1b3b2;
}
.layout-tabs > * {
    --tab: #d2d4d3;
    position: relative;
    z-index: 0;
    line-height: 14px;
    color: #666;
    text-align: center;
}
.layout-tabs > *::before, .layout-tabs > *::after {
    content: "";
    position: absolute;
    z-index: -1;
    top: 0;
    bottom: 0;
    background: var(--tab);
}
.layout-tabs > *::before {
    left: 0;
    right: 40%;
    transform: skewX(25deg);
    border-radius: 0 0 0 4px;
}
.layout-tabs > *::after {
    left: 40%;
    right: 0;
    transform: skewX(-25deg);
    border-radius: 0 0 4px 0;
}
.layout-tabs .model {
    --tab: #fafafa;
    width: 30px;
    color: #111;
    font-weight: bold;
}
.layout-tabs .sheet {
    width: 46px;
}
.layout-tabs .add {
    width: 16px;
    margin-left: -1px;
    color: #333;
    font-size: 14px;
    font-weight: bold;
}
.layout-tabs .add::before {
    transform: skewX(-25deg);
}

/* status bar */
.status {
    display: flex;
    align-items: center;
    height: 20px;
    border-left: 55px solid #b1b3b2;
    background: #e7e7e7;
    color: #111;
    white-space: nowrap;
}
.status-app {
    width: 60px;
    padding-left: 5px;
}
.coords {
    width: 108px;
    text-align: right;
}
.status button {
    width: 20px;
    flex: none;
    display: flex;
    justify-content: center;
}
.status .space {
    width: 26px;
    margin-left: 3px;
}
.status .drop {
    width: 10px;
}
.status .scale {
    width: 50px;
}
.status .gap {
    width: 2px;
}
.status .gap.wide {
    width: 3px;
}
.status .units {
    flex: 1;
    min-width: 0;
    padding: 0 4px;
    appearance: none;
    background: url("data:image/svg+xml,%3Csvg xmlns='http://www.w3.org/2000/svg' width='6' height='4'%3E%3Cpath d='M0 0h6L3 4z' fill='%23222'/%3E%3C/svg%3E") no-repeat right 2px center;
}
```
